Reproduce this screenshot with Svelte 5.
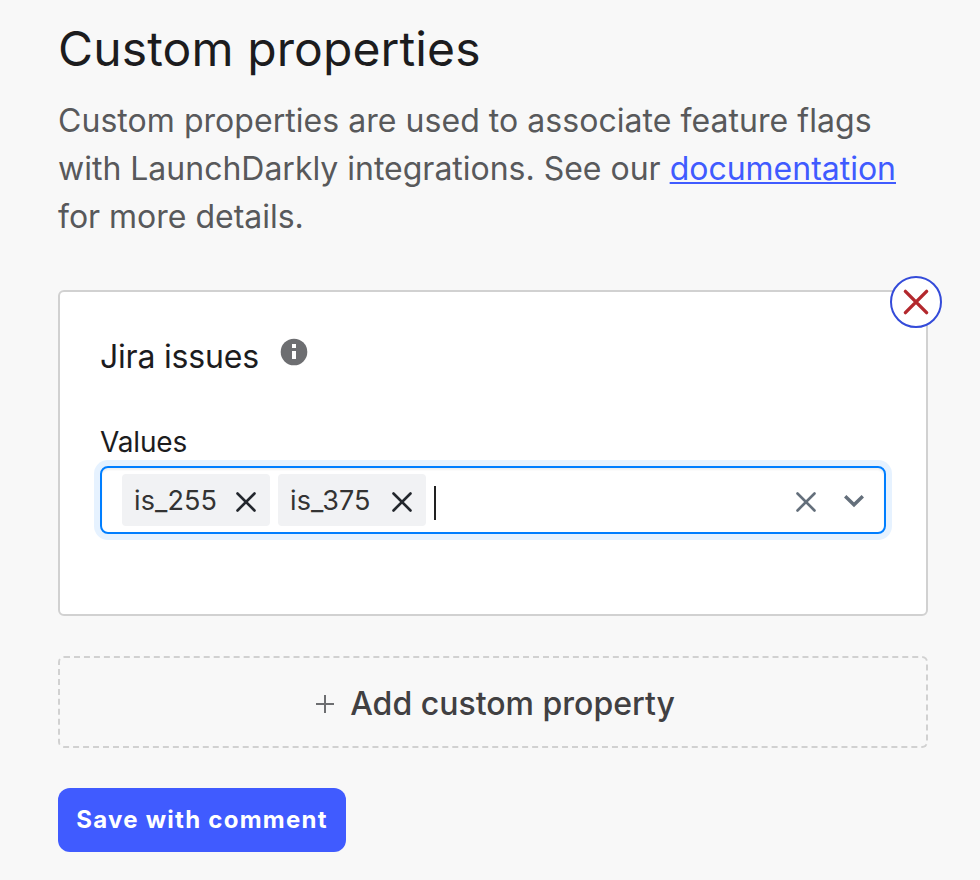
<script>
  const values = ['is_255', 'is_375'];
</script>

<main>
  <h1>Custom properties</h1>
  <p class="intro">
    <span class="first">Custom properties are used to associate feature flags</span><br />
    <span>with LaunchDarkly integrations. See our</span> <a href="#documentation">documentation</a><br />
    <span>for more details.</span>
  </p>

  <section class="card">
    <button class="remove" aria-label="Remove property">
      <svg width="48" height="48" viewBox="0 0 48 48" fill="none" stroke="#b3282d" stroke-width="3.4" stroke-linecap="round"><path d="M13.400 13.400 34.600 34.600M34.600 13.400 13.400 34.600" /></svg>
    </button>
    <div class="title">
      <h2>Jira issues</h2>
      <svg width="28" height="28" viewBox="0 0 28 28"><circle cx="14" cy="14" r="13.3" fill="#6d6e71" /><path d="M12 6h4v4h-4zM12 13h4v8h-4z" fill="#fff" /></svg>
    </div>
    <div class="label">Values</div>
    <div class="select">
      {#each values as value}
        <div class="chip">
          <span>{value}</span>
          <svg width="20" height="20" viewBox="0 0 20 20" fill="none" stroke="#23272d" stroke-width="2.6" stroke-linecap="round"><path d="m1.500 1.500 17 17M18.500 1.500 1.500 18.500" /></svg>
        </div>
      {/each}
      <i class="caret"></i>
      <div class="tools">
        <svg width="20" height="20" viewBox="0 0 20 20" fill="none" stroke="#646f7b" stroke-width="2.6" stroke-linecap="round"><path d="m1.500 1.500 17 17M18.500 1.500 1.500 18.500" /></svg>
        <svg width="20" height="14" viewBox="0 0 20 14" fill="none" stroke="#646f7b" stroke-width="3.4"><path d="m1.200 1.200 8.800 8.600 8.800-8.600" /></svg>
      </div>
    </div>
  </section>

  <button class="add">
    <svg width="20" height="20" viewBox="0 0 20 20" fill="none" stroke="#6d6e71" stroke-width="2"><path d="M10 1v18M1 10h18" /></svg>
    <span>Add custom property</span>
  </button>
  <button class="save"><span>Save with comment</span></button>
</main>

<style>
  :global(body) { background: #f8f8f8; }
  * { box-sizing: border-box; }
  main { width: 980px; height: 880px; padding: 18px 52px 0 58px; font-family: Inter, sans-serif; color: #1c1c1e; overflow: hidden; }
  h1, h2, p { margin: 0; font-weight: 400; white-space: nowrap; }
  h1 { font-size: 48px; line-height: 62px; letter-spacing: 0.12px; }
  .intro { margin-top: 17px; font-size: 32px; line-height: 48px; color: #58595b; letter-spacing: -0.01px; }
  .first { letter-spacing: 0.045px; }
  a { color: #405bff; text-decoration: underline; text-decoration-thickness: 2px; text-underline-offset: 2px; }
  button { font-family: inherit; padding: 0; margin: 0; }
  svg { display: block; flex: none; }
  .card { position: relative; margin-top: 49px; height: 326px; padding: 42px 40px 0; border: 2px solid #d1d1d1; border-radius: 6px; background: #fff; }
  .remove { position: absolute; top: -16px; right: -16px; width: 52px; height: 52px; border: 2px solid #344bd9; border-radius: 50%; background: #fff; }
  .title { display: flex; height: 46px; gap: 21px; }
  h2 { font-size: 32px; line-height: 46px; letter-spacing: -0.2px; }
  .title svg { margin-top: 4px; }
  .label { margin-top: 42px; height: 44px; font-size: 28px; line-height: 40px; letter-spacing: -0.15px; }
  .select { display: flex; align-items: center; width: 786px; height: 68px; padding: 0 20px; border: 2px solid #007eff; border-radius: 8px; box-shadow: 0 0 0 6px #e6f2ff, inset 0 2px 2px #f0f0f0; }
  .chip { display: flex; align-items: center; justify-content: space-between; width: 148px; height: 52px; margin-right: 8px; padding: 0 14px 0 12px; border-radius: 4px; background: #f1f2f4; color: #333; font-size: 27px; letter-spacing: 0.1px; }
  .chip svg { margin-top: 4px; }
  .caret { width: 2px; height: 34px; margin-top: 6px; background: #222; }
  .tools { display: flex; align-items: center; gap: 28px; margin: 4px 0 0 auto; }
  .add { display: flex; align-items: center; justify-content: center; gap: 15px; width: 870px; height: 92px; margin-top: 40px; padding: 2px 0 0 4px; border: 2px dashed #d1d1d1; border-radius: 6px; background: transparent; color: #414042; font-size: 32px; font-weight: 500; white-space: nowrap; }
  .add svg { margin-top: 2px; }
  .save { width: 288px; height: 64px; margin-top: 40px; padding-bottom: 2px; border: 0; border-radius: 12px; background: #405bff; color: #fff; font-size: 24px; font-weight: 700; letter-spacing: 1.25px; white-space: nowrap; }
</style>
